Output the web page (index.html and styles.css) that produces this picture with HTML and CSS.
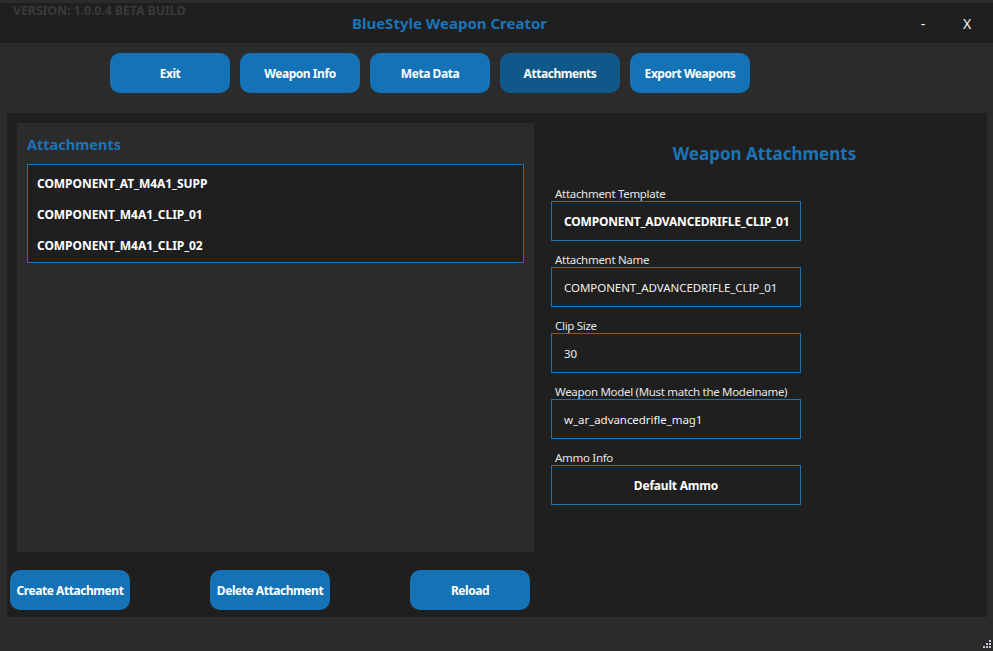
FILE: index.html
```html
<!DOCTYPE html>
<html>
<head>
<meta charset="utf-8">
<link rel="stylesheet" href="styles.css">
</head>
<body>
<div class="window">
  <div class="titlebar">
    <span class="version">VERSION: 1.0.0.4 BETA BUILD</span>
    <span class="title">BlueStyle Weapon Creator</span>
    <div class="winctrls">
      <span class="wbtn">-</span>
      <span class="wbtn">X</span>
    </div>
  </div>
  <div class="nav">
    <button class="btn">Exit</button>
    <button class="btn">Weapon Info</button>
    <button class="btn">Meta Data</button>
    <button class="btn active">Attachments</button>
    <button class="btn">Export Weapons</button>
  </div>
  <div class="main">
    <div class="leftcol">
      <div class="panel">
        <div class="panel-title">Attachments</div>
        <div class="list">
          <div class="item">COMPONENT_AT_M4A1_SUPP</div>
          <div class="item">COMPONENT_M4A1_CLIP_01</div>
          <div class="item">COMPONENT_M4A1_CLIP_02</div>
        </div>
      </div>
      <div class="actions">
        <button class="btn">Create Attachment</button>
        <button class="btn">Delete Attachment</button>
        <button class="btn">Reload</button>
      </div>
    </div>
    <div class="rightcol">
      <div class="heading">Weapon Attachments</div>
      <div class="field">
        <div class="label">Attachment Template</div>
        <div class="box bold">COMPONENT_ADVANCEDRIFLE_CLIP_01</div>
      </div>
      <div class="field">
        <div class="label">Attachment Name</div>
        <div class="box">COMPONENT_ADVANCEDRIFLE_CLIP_01</div>
      </div>
      <div class="field">
        <div class="label">Clip Size</div>
        <div class="box">30</div>
      </div>
      <div class="field">
        <div class="label">Weapon Model (Must match the Modelname)</div>
        <div class="box">w_ar_advancedrifle_mag1</div>
      </div>
      <div class="field">
        <div class="label">Ammo Info</div>
        <div class="box bold center">Default Ammo</div>
      </div>
    </div>
  </div>
  <div class="footer">
    <svg class="grip" width="12" height="12" viewBox="0 0 12 12">
      <rect x="9" y="1" width="2" height="2" fill="#c8ccd8"/>
      <rect x="6" y="4" width="2" height="2" fill="#c8ccd8"/>
      <rect x="9" y="4" width="2" height="2" fill="#c8ccd8"/>
      <rect x="3" y="7" width="2" height="2" fill="#c8ccd8"/>
      <rect x="6" y="7" width="2" height="2" fill="#c8ccd8"/>
      <rect x="9" y="7" width="2" height="2" fill="#c8ccd8"/>
    </svg>
  </div>
</div>
</body>
</html>
```

FILE: styles.css
```css
* { box-sizing: border-box; }
html, body {
  margin: 0;
  padding: 0;
  background: #2b2b2b;
}
body {
  font-family: "Noto Sans", "Open Sans", sans-serif;
  color: #fff;
}
.window {
  width: 993px;
  height: 651px;
  background: #2b2b2b;
  display: flex;
  flex-direction: column;
  overflow: hidden;
}
.titlebar {
  position: relative;
  margin-top: 3px;
  height: 40px;
  background: #1f1f1f;
  display: flex;
  align-items: center;
  justify-content: center;
}
.version {
  position: absolute;
  left: 13px;
  top: 0px;
  font-size: 12.5px;
  font-weight: 700;
  color: #3a3a3a;
  line-height: 16px;
  letter-spacing: -0.15px;
}
.title {
  margin-left: -94px;
  font-size: 15px;
  font-weight: 700;
  color: #1a74b8;
  letter-spacing: 0px;
}
.winctrls {
  position: absolute;
  right: 21px;
  top: 0;
  height: 40px;
  display: flex;
  align-items: center;
  gap: 34px;
}
.wbtn {
  font-size: 14px;
  color: #f2f2f2;
  width: 10px;
  text-align: center;
}
.nav {
  height: 70px;
  display: flex;
  align-items: flex-start;
  padding: 10px 0 0 110px;
  gap: 10px;
}
.btn {
  width: 120px;
  height: 40px;
  border: none;
  border-radius: 10px;
  background: #1473b7;
  color: #fff;
  font-family: "Noto Sans", "Open Sans", sans-serif;
  font-size: 12px;
  font-weight: 700;
  letter-spacing: -0.45px;
  padding: 0;
}
.btn.active {
  background: #10578a;
}
.main {
  margin: 0 6px 0 7px;
  height: 504px;
  background: #1f1f1f;
  display: flex;
}
.leftcol {
  width: 527px;
  display: flex;
  flex-direction: column;
}
.panel {
  margin: 10px 0 0 10px;
  width: 517px;
  height: 429px;
  background: #2b2b2b;
  padding: 11px 10px 0 10px;
}
.panel-title {
  font-size: 14.5px;
  font-weight: 700;
  color: #1a74b8;
  line-height: 20px;
  margin-bottom: 10px;
}
.list {
  border: 1px solid #1a74b8;
  background: #1f1f1f;
  padding: 3px 0 1px 9px;
}
.item {
  height: 31px;
  line-height: 31px;
  font-size: 12px;
  font-weight: 700;
  letter-spacing: -0.05px;
}
.actions {
  display: flex;
  gap: 80px;
  padding: 18px 0 0 3px;
}
.rightcol {
  flex: 1;
  padding: 29px 0 0 17px;
}
.heading {
  font-size: 17px;
  font-weight: 700;
  color: #1a74b8;
  line-height: 24px;
  text-align: center;
  padding-right: 9px;
  margin-bottom: 21px;
}
.field {
  margin-bottom: 12px;
}
.label {
  font-size: 11.5px;
  line-height: 14px;
  color: #e6e6e6;
  padding-left: 4px;
  letter-spacing: -0.3px;
}
.box {
  width: 250px;
  height: 40px;
  border: 1px solid #1a74b8;
  background: #1f1f1f;
  display: flex;
  align-items: center;
  padding-left: 12px;
  font-size: 11.5px;
  color: #f0f0f0;
  letter-spacing: -0.05px;
}
.box.bold {
  font-weight: 700;
  color: #fff;
  font-size: 12px;
  letter-spacing: -0.2px;
}
.box.center {
  justify-content: center;
  padding-left: 0;
}
.footer {
  flex: 1;
  display: flex;
  justify-content: flex-end;
  align-items: flex-end;
}
.grip {
  display: block;
  margin: 0 1px 0 0;
}
```
